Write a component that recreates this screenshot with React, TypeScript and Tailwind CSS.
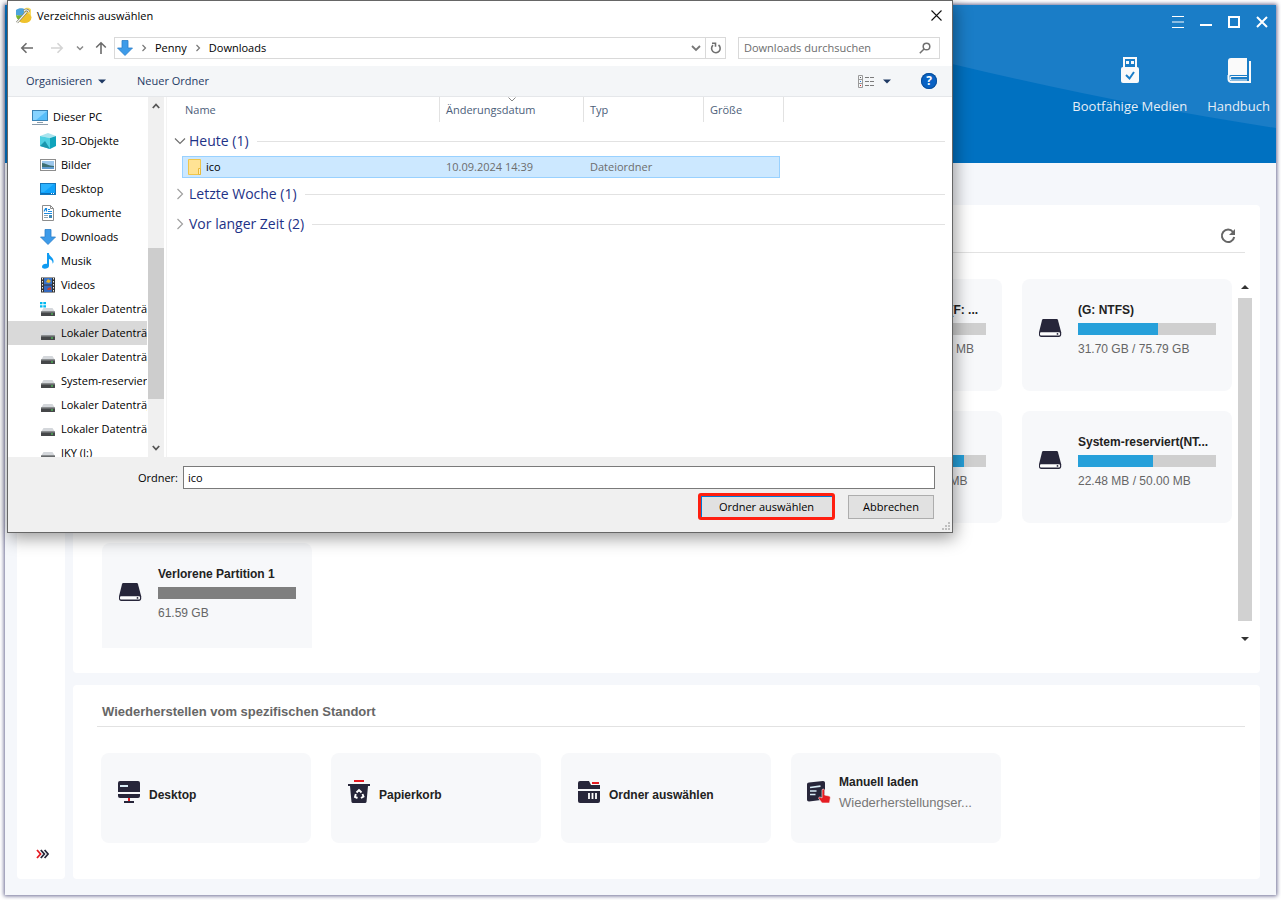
import type { ReactNode } from 'react';
import clsx from 'clsx';

type Place = {
    label: string;
    icon: ReactNode;
    root?: boolean;
    selected?: boolean;
};

type Partition = {
    name: string;
    size: string;
    percent: number;
    place: string;
    lost?: boolean;
};

/* ---------- icons ---------- */

function DriveIcon({ system = false }: { system?: boolean }) {
    return (
        <svg width="16" height="16" viewBox="0 0 16 16">
            <path d="M3.500 7h9L15 11H1z" fill="#d4d7db" />
            <rect x="1" y="10.5" width="14" height="4.5" rx="0.6" fill="#454749" />
            <rect x="1" y="10.5" width="14" height="1" fill="#8a8d90" />
            <rect x="11" y="12.5" width="2" height="1" fill="#53e05c" />
            {system && <path d="M0 1h2.500v2.300H0zM3.300 1h2.700v2.300H3.300zM0 4.200h2.500v2.300H0zM3.300 4.200h2.700v2.300H3.300z" fill="#00b8f0" />}
        </svg>
    );
}

function ComputerIcon() {
    return (
        <svg width="16" height="16" viewBox="0 0 16 16">
            <rect x="0.500" y="1.500" width="15" height="10" fill="#57bdf9" stroke="#3b83b5" />
            <path d="M1 2h14L4 11H1z" fill="#86d3ff" />
            <path d="M5 13.500h6M0 15.500h16" stroke="#8a9cab" />
        </svg>
    );
}

function CubeIcon() {
    return (
        <svg width="16" height="16" viewBox="0 0 16 16">
            <path d="M0 3l8-3 8 3-6 2z" fill="#a9e4ee" />
            <path d="M0 3l10 2v11l-10-3z" fill="#4fd0e2" />
            <path d="M16 3l-6 2v11l6-3z" fill="#0fa3bb" />
            <path d="M0 13l5-5 5 8z" fill="#1a97ad" />
        </svg>
    );
}

function PictureIcon() {
    return (
        <svg width="16" height="16" viewBox="0 0 16 16">
            <rect x="0.500" y="2.500" width="15" height="11" fill="#fff" stroke="#8d8d8d" />
            <rect x="2" y="4" width="12" height="8" fill="#9cc7ec" />
            <path d="M2 6c4 0 6 3 12 3v3H2z" fill="#3d6f73" />
            <path d="M2 10h12v2H2z" fill="#5f9bd0" />
        </svg>
    );
}

function DesktopIcon() {
    return (
        <svg width="16" height="16" viewBox="0 0 16 16">
            <rect x="0.500" y="2.500" width="15" height="11" fill="#0fa2fb" stroke="#1377bd" />
            <path d="M1 3h13L4 11H1z" fill="#2cb3ff" />
            <path d="M1 12.500h14" stroke="#0b6fb8" />
            <path d="M11 12.500h1M13 12.500h1" stroke="#fff" />
        </svg>
    );
}

function DocumentIcon() {
    return (
        <svg width="16" height="16" viewBox="0 0 16 16">
            <path d="M2.500.5h8l3 3v12h-11z" fill="#fff" stroke="#8d8d8d" />
            <path d="M10.500.5v3h3" fill="none" stroke="#8d8d8d" />
            <path d="M4 6.500l1.500-3h1v3M8 4.500h2M8 6.500h4M4 8.500h8" fill="none" stroke="#1c8be0" strokeWidth="1.200" />
            <path d="M4 10.500h4M4 12.500h4" stroke="#8fa3b0" />
            <rect x="9" y="10" width="3" height="3" fill="#3f88b5" />
        </svg>
    );
}

function DownArrowIcon() {
    return (
        <svg width="16" height="16" viewBox="0 0 16 16">
            <path d="M5 .5h6V8h4.500L8 15.500.5 8H5z" fill="#3d9be9" stroke="#2b7fc9" strokeWidth="0.800" />
        </svg>
    );
}

function MusicIcon() {
    return (
        <svg width="16" height="16" viewBox="0 0 16 16">
            <path d="M7 0h2c0 4 5 4 4.500 9-.2 1-.8 1.500-1 1.500C13 8 11 6.500 9 6v7c0 3-7 4-7 .8C2 11.500 5 10.500 7 11z" fill="#0f9bf2" />
        </svg>
    );
}

function FilmIcon() {
    return (
        <svg width="16" height="16" viewBox="0 0 16 16">
            <rect x="1" y="0.500" width="14" height="15" fill="#333" />
            <rect x="4" y="1" width="8" height="6.500" fill="#3a74c9" />
            <rect x="4" y="8.500" width="8" height="6.500" fill="#3569bf" />
            <path d="M8 2l3 2-2 2-3-1z" fill="#e3b12c" />
            <path d="M8 11l3-1v3H7z" fill="#c0422f" />
            <path d="M2.500 1v14M13.500 1v14" stroke="#eee" strokeDasharray="1.500 1.500" />
        </svg>
    );
}

function FolderIcon() {
    return (
        <svg width="15" height="18" viewBox="0 0 15 18">
            <path d="M1.500 1.500h12v15h-12z" fill="#ffe394" stroke="#f0c64b" />
            <path d="M11.500 10.500h2v6h-2z" fill="#fff0ba" stroke="#e8b93a" />
        </svg>
    );
}

function AppIcon() {
    return (
        <svg width="17" height="17" viewBox="0 0 17 17">
            <ellipse cx="9.500" cy="10.500" rx="7" ry="5.500" fill="#efc22c" />
            <path d="M1 3c3-2.500 7-2 9-.5L8 8C6 9 3 9 1 8z" fill="#4ba3dc" />
            <path d="M1 8c2 1 5 1 7 0l-3 5c-2 0-4-2-4-5z" fill="#78b62e" />
            <path d="M9 2c2-2 6-1.500 7 .5v7C15 6 12 5 9 6z" fill="#f7db62" />
            <path d="M2 15.500L11.500 5M9 4c2-2 4-1 5 1" fill="none" stroke="#6f6f60" strokeWidth="2.400" />
            <path d="M2 15.500L11.500 5M9 4c2-2 4-1 5 1" fill="none" stroke="#f4f4ee" strokeWidth="1.200" />
        </svg>
    );
}

function HardDiskIcon() {
    return (
        <svg width="24" height="20" viewBox="0 0 24 20">
            <path d="M5.500 1h13c.8 0 1.300.5 1.500 1.200l3.200 12v2.300c0 1.600-.9 2.500-2.400 2.500H3.300C1.700 19 1 18.100 1 16.500v-2.300l3-12C4.200 1.500 4.700 1 5.500 1z" fill="#27263a" />
            <rect x="2" y="14.200" width="20" height="3.400" rx="1" fill="#fff" />
            <circle cx="19.500" cy="15.900" r="0.900" fill="#27263a" />
        </svg>
    );
}

function MonitorIcon() {
    return (
        <svg width="22" height="22" viewBox="0 0 22 22">
            <path d="M2 0h18a2 2 0 0 1 2 2v9H0V2a2 2 0 0 1 2-2z" fill="#27263a" />
            <path d="M2 4h8v2H2z" fill="#d9ecf6" />
            <path d="M0 13h22v2a2 2 0 0 1-2 2H2a2 2 0 0 1-2-2z" fill="#27263a" />
            <path d="M10 17h2v3h-2z" fill="#e51c23" />
            <path d="M6 20h10v2H6z" fill="#27263a" />
        </svg>
    );
}

function BinIcon() {
    return (
        <svg width="22" height="24" viewBox="0 0 22 24">
            <path d="M6 0h10v2H6z" fill="#e51c23" />
            <path d="M0 4h22v2h-2l-1.500 16a1.500 1.500 0 0 1-1.500 1H5a1.500 1.500 0 0 1-1.500-1L2 6H0z" fill="#27263a" />
            <path d="M8.500 12.500L11 10l2.500 2.500M14.500 14l1 2.500-2.500 1.500M9.500 18L7 17l.8-3" fill="none" stroke="#fff" strokeWidth="1.900" />
        </svg>
    );
}

function ArchiveIcon() {
    return (
        <svg width="22" height="22" viewBox="0 0 22 22">
            <path d="M2 0h9l2 4h9v4H0V2a2 2 0 0 1 2-2z" fill="#27263a" />
            <path d="M14 1h7v2h-7z" fill="#e51c23" />
            <path d="M0 10h22v10a2 2 0 0 1-2 2H2a2 2 0 0 1-2-2z" fill="#27263a" />
            <path d="M11 12v6M14.500 12v6M18 12v6" stroke="#fff" strokeWidth="1.800" />
        </svg>
    );
}

function ManualIcon() {
    return (
        <svg width="24" height="22" viewBox="0 0 24 22">
            <path d="M2 1.500L16 0c1.300 0 2 .7 2 2v16.500L2 20.500c-1.300 0-2-.7-2-2v-15c0-1.200.8-1.900 2-2z" fill="#27263a" />
            <path d="M3 6.500l10.500-1.300M3 10h6.500M3 13.500h5.500" stroke="#d9ecf6" strokeWidth="1.700" />
            <path d="M15 9c0-1.200 2.500-1.200 2.500 0v5l4.500 1c1 .3 1.500 1 1.300 2l-.8 5H15l-3.300-4.500c-.5-1.500 1.500-2 3.300-.5z" fill="#e51c23" stroke="#f7f8fa" strokeWidth="0.600" />
        </svg>
    );
}

function UsbIcon() {
    return (
        <svg width="18" height="27" viewBox="0 0 18 27">
            <path d="M3 1h12v10H3z" fill="none" stroke="#fafafa" strokeWidth="2" />
            <path d="M5 4h3v3H5zM10 4h3v3h-3z" fill="#fafafa" />
            <rect x="0" y="10" width="18" height="16" rx="2" fill="#fafafa" />
            <path d="M5 18l3.500 3.500L13 15" fill="none" stroke="#1a7dc7" strokeWidth="2" />
        </svg>
    );
}

function BookIcon() {
    return (
        <svg width="24" height="27" viewBox="0 0 24 27">
            <path d="M4 1h16v17H4a3 3 0 0 0-3 3V4a3 3 0 0 1 3-3z" fill="#fafafa" />
            <path d="M20 19.500H4.500a1.800 1.800 0 0 0 0 3.500H20" fill="none" stroke="#fafafa" strokeWidth="1.200" />
            <path d="M1.500 18v4c0 2 1.500 3 3.500 3H23V4" fill="none" stroke="#fafafa" strokeWidth="2" />
        </svg>
    );
}

function Caret() {
    return (
        <svg width="8" height="5" viewBox="0 0 8 5">
            <path d="M0 0.500h8L4 4.500z" fill="#1f3a64" />
        </svg>
    );
}

function Chevron({ open = false }: { open?: boolean }) {
    return (
        <svg width="12" height="12" viewBox="0 0 12 12" fill="none" stroke={open ? '#707070' : '#a0a0a0'} strokeWidth="1.200">
            {open ? <path d="M1 3.500l5 5 5-5" /> : <path d="M3.500 1l5 5-5 5" />}
        </svg>
    );
}

/* ---------- data ---------- */

const places: Place[] = [
    { label: 'Dieser PC', icon: <ComputerIcon />, root: true },
    { label: '3D-Objekte', icon: <CubeIcon /> },
    { label: 'Bilder', icon: <PictureIcon /> },
    { label: 'Desktop', icon: <DesktopIcon /> },
    { label: 'Dokumente', icon: <DocumentIcon /> },
    { label: 'Downloads', icon: <DownArrowIcon /> },
    { label: 'Musik', icon: <MusicIcon /> },
    { label: 'Videos', icon: <FilmIcon /> },
    { label: 'Lokaler Datenträger', icon: <DriveIcon system /> },
    { label: 'Lokaler Datenträger', icon: <DriveIcon />, selected: true },
    { label: 'Lokaler Datenträger', icon: <DriveIcon /> },
    { label: 'System-reserviert', icon: <DriveIcon /> },
    { label: 'Lokaler Datenträger', icon: <DriveIcon /> },
    { label: 'Lokaler Datenträger', icon: <DriveIcon /> },
    { label: 'JKY (I:)', icon: <DriveIcon /> },
];

const partitions: Partition[] = [
    { name: 'System-reserviert(F: ...', size: '350.12 MB / 499.00 MB', percent: 60, place: 'col-start-4 row-start-1' },
    { name: '(G: NTFS)', size: '31.70 GB / 75.79 GB', percent: 58, place: 'col-start-5 row-start-1' },
    { name: 'Partition (NTFS)', size: '84.02 MB / 100.00 MB', percent: 84, place: 'col-start-4 row-start-2' },
    { name: 'System-reserviert(NT...', size: '22.48 MB / 50.00 MB', percent: 54, place: 'col-start-5 row-start-2' },
    { name: 'Verlorene Partition 1', size: '61.59 GB', percent: 100, place: 'col-start-1 row-start-3', lost: true },
];

const locations = [
    { name: 'Desktop', icon: <MonitorIcon /> },
    { name: 'Papierkorb', icon: <BinIcon /> },
    { name: 'Ordner auswählen', icon: <ArchiveIcon /> },
    { name: 'Manuell laden', icon: <ManualIcon />, hint: 'Wiederherstellungser...' },
];

/* ---------- main window ---------- */

function Header() {
    return (
        <header className="relative h-[158px] shrink-0 bg-[#0071c1] text-[#e6eef6]">
            <svg className="absolute top-0 right-0" width="324" height="158" viewBox="0 0 324 158">
                <path d="M0 0h324v123Q171 100 0 59z" fill="#1a7dc7" />
            </svg>
            <div className="relative flex flex-col items-end">
                <div className="flex h-[34px] items-center gap-4 pr-2 text-white">
                    <button aria-label="Menü">
                        <svg width="12" height="12" viewBox="0 0 12 12"><path d="M0 .5h12M0 6h12M0 11.500h12" stroke="currentColor" /></svg>
                    </button>
                    <button aria-label="Minimieren">
                        <svg width="12" height="12" viewBox="0 0 12 12"><path d="M0 9h12" stroke="currentColor" strokeWidth="2" /></svg>
                    </button>
                    <button aria-label="Maximieren">
                        <svg width="12" height="12" viewBox="0 0 12 12"><path d="M1 1h10v10H1z" fill="none" stroke="currentColor" strokeWidth="2" /></svg>
                    </button>
                    <button aria-label="Schließen">
                        <svg width="12" height="12" viewBox="0 0 12 12"><path d="M1 1l10 10M11 1L1 11" stroke="currentColor" strokeWidth="2" /></svg>
                    </button>
                </div>
                <div className="mt-[18px] flex gap-5 pr-1.5 font-['Open_Sans',sans-serif] text-[13px] leading-5">
                    <button className="flex flex-col items-center gap-2">
                        <UsbIcon />
                        <span className="pt-1">Bootfähige Medien</span>
                    </button>
                    <button className="flex flex-col items-center gap-2">
                        <BookIcon />
                        <span className="pt-1">Handbuch</span>
                    </button>
                </div>
            </div>
        </header>
    );
}

function PartitionCard({ part }: { part: Partition }) {
    return (
        <div className={clsx('flex h-28 gap-4 rounded-lg bg-[#f7f8fa] px-4 pt-[21px]', part.place)}>
            <div className="pt-[18px]"><HardDiskIcon /></div>
            <div className="min-w-0 flex-1">
                <p className="text-xs leading-5 font-bold whitespace-nowrap text-[#222]">{part.name}</p>
                <div className="mt-[3px] h-3 bg-[#cfcfcf]">
                    <div className={clsx('h-3', part.lost ? 'bg-[#7f7f7f]' : 'bg-[#26a0da]')} style={{ width: `${part.percent}%` }} />
                </div>
                <p className="mt-1 text-xs leading-5 whitespace-nowrap text-[#666]">{part.size}</p>
            </div>
        </div>
    );
}

function PartitionPanel() {
    return (
        <section className="flex min-h-0 flex-1 flex-col rounded bg-white pb-[25px]">
            <div className="mr-[15px] ml-6 flex h-12 shrink-0 items-center justify-end border-b border-[#e2e2e2] pt-3.5 pr-2">
                <button aria-label="Aktualisieren">
                    <svg width="18" height="18" viewBox="0 0 18 18">
                        <path d="M14 5A6.200 6.200 0 1 0 15.200 10" fill="none" stroke="#666" strokeWidth="2" />
                        <path d="M16 2v6h-6z" fill="#666" />
                    </svg>
                </button>
            </div>
            <div className="flex min-h-0 flex-1 gap-1.5 pt-[26px] pr-2 pl-[29px]">
                <div className="grid flex-1 grid-cols-5 content-start gap-5 overflow-hidden">
                    {partitions.map((part) => (
                        <PartitionCard key={part.place} part={part} />
                    ))}
                </div>
                <div className="flex w-3.5 flex-col items-center py-1.5">
                    <svg width="8" height="5" viewBox="0 0 8 5"><path d="M4 0l4 4H0z" fill="#333" /></svg>
                    <div className="mt-2 mb-4 w-3.5 flex-1 bg-[#d1d1d1]" />
                    <svg width="8" height="5" viewBox="0 0 8 5"><path d="M0 0h8L4 4z" fill="#333" /></svg>
                </div>
            </div>
        </section>
    );
}

function LocationPanel() {
    return (
        <section className="rounded bg-white pb-9">
            <h2 className="mr-[15px] ml-6 h-[42px] border-b border-[#e2e2e2] pt-[17px] pl-[5px] text-[13px] leading-5 font-bold text-[#666]">
                Wiederherstellen vom spezifischen Standort
            </h2>
            <div className="grid grid-cols-5 gap-5 pt-[26px] pr-[29px] pl-7">
                {locations.map((loc) => (
                    <button key={loc.name} className="flex h-[90px] items-start gap-2 rounded-lg bg-[#f7f8fa] px-4 pt-[17px] text-left">
                        <span className="flex h-11 w-6 shrink-0 items-center justify-center">{loc.icon}</span>
                        <span className={clsx('flex flex-col', loc.hint ? 'gap-px pt-0.5' : 'pt-[15px]')}>
                            <span className="text-xs leading-5 font-bold text-[#222]">{loc.name}</span>
                            {loc.hint && <span className="text-[13px] leading-5 text-[#777]">{loc.hint}</span>}
                        </span>
                    </button>
                ))}
            </div>
        </section>
    );
}

/* ---------- folder dialog ---------- */

function AddressBar() {
    return (
        <div className="flex h-9 items-center pr-3 pl-3">
            <div className="flex w-[94px] shrink-0 items-center text-[#666]">
                <button aria-label="Zurück" className="mr-4">
                    <svg width="14" height="12" viewBox="0 0 14 12" fill="none" stroke="#6b6b6b" strokeWidth="1.600"><path d="M13 6H2M6.500 1.200L1.800 6l4.700 4.800" /></svg>
                </button>
                <button aria-label="Vorwärts" className="mr-3">
                    <svg width="14" height="12" viewBox="0 0 14 12" fill="none" stroke="#d4d4d4" strokeWidth="1.600"><path d="M1 6h11M7.500 1.200L12.200 6l-4.700 4.800" /></svg>
                </button>
                <button aria-label="Verlauf" className="mr-[11px]">
                    <svg width="8" height="6" viewBox="0 0 8 6" fill="none" stroke="#888" strokeWidth="1.500"><path d="M1 1.500l3 3 3-3" /></svg>
                </button>
                <button aria-label="Nach oben">
                    <svg width="12" height="14" viewBox="0 0 12 14" fill="none" stroke="#6b6b6b" strokeWidth="1.600"><path d="M6 13V2M1.200 6.500L6 1.800l4.800 4.700" /></svg>
                </button>
            </div>
            <div className="flex h-[22px] flex-1 items-center border border-[#d9d9d9] pl-0.5">
                <DownArrowIcon />
                <svg className="mx-2" width="6" height="8" viewBox="0 0 6 8" fill="none" stroke="#777" strokeWidth="1.200"><path d="M1.500 1l3 3-3 3" /></svg>
                <button>Penny</button>
                <svg className="mx-2" width="6" height="8" viewBox="0 0 6 8" fill="none" stroke="#777" strokeWidth="1.200"><path d="M1.500 1l3 3-3 3" /></svg>
                <button>Downloads</button>
                <button aria-label="Vorherige Orte" className="mr-1 ml-auto">
                    <svg width="10" height="8" viewBox="0 0 10 8" fill="none" stroke="#777" strokeWidth="1.800"><path d="M1 2l4 4 4-4" /></svg>
                </button>
                <button aria-label="Neu laden" className="flex h-5 w-5 items-center justify-center border-l border-[#d9d9d9]">
                    <svg width="12" height="12" viewBox="0 0 12 12" fill="none" stroke="#707070" strokeWidth="1.600"><path d="M3 3.200A4.300 4.300 0 1 0 8.500 3M2 1.300h3.500v3.500" /></svg>
                </button>
            </div>
            <div className="ml-3 flex h-[22px] w-[202px] items-center border border-[#d9d9d9] pr-2 pl-[5px]">
                <input aria-label="Downloads durchsuchen" placeholder="Downloads durchsuchen" className="min-w-0 flex-1 outline-none placeholder:text-[#6d6d6d]" />
                <svg width="12" height="12" viewBox="0 0 12 12" fill="none" stroke="#707070" strokeWidth="1.500"><circle cx="7.500" cy="4.500" r="3.300" /><path d="M5 7L.8 11.200" /></svg>
            </div>
        </div>
    );
}

function Toolbar() {
    return (
        <div className="flex h-[31px] items-center border-b border-[#e5e7ea] bg-[#f4f6f8] pr-[15px] pl-[18px] text-[#1f3a64]">
            <button className="flex w-[111px] items-center gap-1.5">Organisieren <Caret /></button>
            <button>Neuer Ordner</button>
            <button aria-label="Ansicht" className="ml-auto flex items-center gap-2">
                <svg width="17" height="13" viewBox="0 0 17 13">
                    <path d="M.5.5h4v12h-4zM.5 4.500h4M.5 8.500h4" fill="none" stroke="#9a9a9a" />
                    <path d="M7 2.500h4M12 2.500h4M7 6.500h4M12 6.500h4M7 10.500h4M12 10.500h4" stroke="#7c7c7c" />
                    <path d="M2 2h1v1H2z" fill="#555" />
                    <path d="M2 6h1v1H2z" fill="#2a7fd8" />
                    <path d="M2 10h1v1H2z" fill="#d22" />
                </svg>
                <Caret />
            </button>
            <button aria-label="Hilfe" className="ml-[30px] flex h-4 w-4 items-center justify-center rounded-full bg-[#0a63c4] text-xs leading-4 font-bold text-white ring-1 ring-[#0b4f9a] ring-inset">
                ?
            </button>
        </div>
    );
}

function PlacesList() {
    return (
        <nav className="flex w-[156px] shrink-0">
            <ul className="min-w-0 flex-1 overflow-hidden pt-2 pr-px">
                {places.map((place, i) => (
                    <li key={i}>
                        <a
                            href="#"
                            className={clsx(
                                'flex h-6 items-center gap-[5px] overflow-hidden whitespace-nowrap',
                                place.root ? 'pl-6' : 'pl-8',
                                place.selected && 'bg-[#d9d9d9]',
                            )}
                        >
                            <span className="shrink-0">{place.icon}</span>
                            {place.label}
                        </a>
                    </li>
                ))}
            </ul>
            <div className="flex w-4 flex-col items-center bg-[#f0f0f0] py-1.5">
                <svg width="8" height="6" viewBox="0 0 8 6" fill="none" stroke="#555" strokeWidth="1.800"><path d="M.8 5L4 1.500 7.200 5" /></svg>
                <div className="mt-[139px] mb-auto h-[151px] w-4 bg-[#cdcdcd]" />
                <svg width="8" height="6" viewBox="0 0 8 6" fill="none" stroke="#555" strokeWidth="1.800"><path d="M.8 1L4 4.500 7.200 1" /></svg>
            </div>
        </nav>
    );
}

function GroupRow({ title, open }: { title: string; open?: boolean }) {
    return (
        <tr>
            <td colSpan={5} className="h-[30px] p-0">
                <div className="flex items-center pr-[7px] pl-[7px]">
                    <Chevron open={open} />
                    <span className="ml-[3px] text-sm leading-5 text-[#1e3287]">{title}</span>
                    <span className="ml-2 h-px flex-1 bg-[#e2e2e2]" />
                </div>
            </td>
        </tr>
    );
}

function FileTable() {
    const cell = 'flex h-[22px] items-center border-y border-[#99d1ff] bg-[#cce8ff] text-[#6d6d6d]';
    const head = 'h-[29px] p-0 align-top font-normal';
    const headCell = 'flex h-[25px] items-center border-r border-[#e2e2e2]';
    return (
        <div className="ml-0.5 flex-1 border-l border-[#f3f3f3]">
            <table className="w-full table-fixed border-collapse text-left">
                <colgroup>
                    <col className="w-[273px]" />
                    <col className="w-36" />
                    <col className="w-[120px]" />
                    <col className="w-20" />
                    <col />
                </colgroup>
                <thead className="text-[#4c607a]">
                    <tr>
                        <th className={head}><div className={clsx(headCell, 'pl-[18px]')}>Name</div></th>
                        <th className={head}>
                            <div className={clsx(headCell, 'relative pl-1.5')}>
                                Änderungsdatum
                                <svg className="absolute top-0 left-[68px]" width="8" height="5" viewBox="0 0 8 5" fill="none" stroke="#888"><path d="M.5.5L4 4 7.500.5" /></svg>
                            </div>
                        </th>
                        <th className={head}><div className={clsx(headCell, 'pl-1.5')}>Typ</div></th>
                        <th className={head}><div className={clsx(headCell, 'pl-1.5')}>Größe</div></th>
                        <th className={head} />
                    </tr>
                </thead>
                <tbody>
                    <GroupRow title="Heute (1)" open />
                    <tr>
                        <td className="h-[23px] p-0 pl-[15px] align-top">
                            <div className={clsx(cell, 'gap-1 border-l pl-1')}>
                                <FolderIcon />
                                <span className="text-black">ico</span>
                            </div>
                        </td>
                        <td className="p-0 align-top"><div className={clsx(cell, 'pl-1.5')}>10.09.2024 14:39</div></td>
                        <td className="p-0 align-top"><div className={clsx(cell, 'pl-1.5')}>Dateiordner</div></td>
                        <td className="p-0 pr-1 align-top"><div className={clsx(cell, 'border-r')} /></td>
                        <td />
                    </tr>
                    <GroupRow title="Letzte Woche (1)" />
                    <GroupRow title="Vor langer Zeit (2)" />
                </tbody>
            </table>
        </div>
    );
}

function FolderDialog() {
    return (
        <div
            role="dialog"
            aria-labelledby="dialog-title"
            className="absolute top-0 left-[7px] w-[946px] border border-[#666] bg-white font-['Open_Sans',sans-serif] text-[11px] leading-4 text-black shadow-[2px_5px_16px_rgba(0,0,0,0.4)]"
        >
            <div className="flex h-[29px] items-center pr-2.5 pl-[7px]">
                <AppIcon />
                <h1 id="dialog-title" className="ml-[5px]">Verzeichnis auswählen</h1>
                <button aria-label="Schließen" className="ml-auto">
                    <svg width="11" height="11" viewBox="0 0 11 11" stroke="#111" strokeWidth="1.100"><path d="M.5.5l10 10M10.500.5l-10 10" /></svg>
                </button>
            </div>
            <AddressBar />
            <Toolbar />
            <div className="flex h-[360px]">
                <PlacesList />
                <FileTable />
            </div>
            <div className="relative flex flex-col gap-1 bg-[#f0f0f0] pt-[9px] pr-[17px] pb-3">
                <div className="flex h-[23px] items-center">
                    <label htmlFor="folder" className="w-[175px] pr-[5px] text-right">Ordner:</label>
                    <input id="folder" defaultValue="ico" className="h-[23px] flex-1 border border-[#7a7a7a] bg-white px-1 outline-none" />
                </div>
                <div className="flex items-center justify-end gap-[13px] pr-px">
                    <button className="h-[27px] w-[137px] rounded-[3px] border-3 border-[#ff1f10] bg-[#e1e1e1] shadow-[inset_1px_1px_0_#0078d7]">
                        Ordner auswählen
                    </button>
                    <button className="h-6 w-[86px] border border-[#adadad] bg-[#e1e1e1]">Abbrechen</button>
                </div>
                <svg className="absolute right-0.5 bottom-0.5" width="9" height="9" viewBox="0 0 9 9" fill="#bfbfbf">
                    <path d="M7 1h2v2H7zM4 4h2v2H4zM7 4h2v2H7zM1 7h2v2H1zM4 7h2v2H4zM7 7h2v2H7z" />
                </svg>
            </div>
        </div>
    );
}

function App() {
    return (
        <div className="relative h-screen overflow-hidden bg-white p-[5px] font-['Liberation_Sans',Arial,sans-serif]">
            <div className="flex h-full flex-col bg-[#f5f7fb] shadow-[0_0_4px_1px_#6b6b92]">
                <Header />
                <main className="flex min-h-0 flex-1 gap-2 pt-[42px] pr-4 pb-4 pl-3">
                    <aside className="flex w-12 shrink-0 flex-col items-center justify-end rounded bg-white pb-5">
                        <button aria-label="Erweitern" className="ml-0.5">
                            <svg width="13" height="10" viewBox="0 0 13 10" fill="none" strokeWidth="1.800">
                                <path d="M1 1l3.500 4L1 9" stroke="#e51c23" />
                                <path d="M4.800 1l3.500 4-3.500 4M8.600 1l3.500 4-3.500 4" stroke="#27263a" />
                            </svg>
                        </button>
                    </aside>
                    <div className="flex min-w-0 flex-1 flex-col gap-3">
                        <PartitionPanel />
                        <LocationPanel />
                    </div>
                </main>
            </div>
            <FolderDialog />
        </div>
    );
}

export default App;
